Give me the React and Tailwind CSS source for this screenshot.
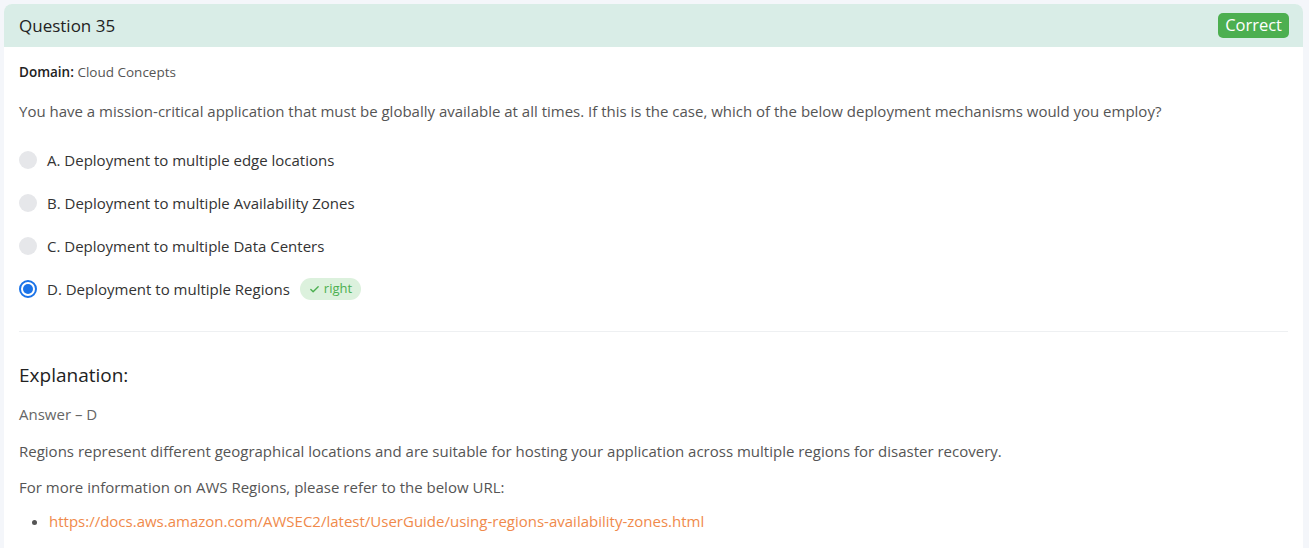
import React from 'react';

const options = [
  { key: 'A', text: 'Deployment to multiple edge locations' },
  { key: 'B', text: 'Deployment to multiple Availability Zones' },
  { key: 'C', text: 'Deployment to multiple Data Centers' },
  { key: 'D', text: 'Deployment to multiple Regions', selected: true, right: true },
];

const Radio = ({ selected }) =>
  selected ? (
    <span className="w-[18px] h-[18px] rounded-full border-2 border-[#1a73e8] flex items-center justify-center shrink-0">
      <span className="w-[10px] h-[10px] rounded-full bg-[#1a73e8]" />
    </span>
  ) : (
    <span className="w-[18px] h-[18px] rounded-full bg-[#e6e7ea] shrink-0" />
  );

const App = () => {
  return (
    <div className="min-h-[548px] bg-[#f4f6fa] pt-[4px] pl-[4px] pr-[6px] font-['Open_Sans',sans-serif]">
      <div className="bg-white rounded-t-[8px] min-h-[544px]">
        <div className="h-[43px] bg-[#d9ede7] rounded-t-[8px] flex items-center justify-between pl-[15px] pr-[14px]">
          <span className="text-[17px] text-[#222] font-medium">Question 35</span>
          <span className="bg-[#4caf50] text-white text-[16.5px] rounded-[5px] px-[7px] h-[25px] flex items-center">Correct</span>
        </div>
        <div className="px-[15px]">
          <div className="pt-[15px] text-[13.5px] leading-[20px] text-[#555]">
            <span className="font-semibold text-[#222]">Domain:</span> Cloud Concepts
          </div>
          <p className="mt-[18px] text-[15px] leading-[22px] text-[#555]">
            You have a mission-critical application that must be globally available at all times. If this is the case, which of the below deployment mechanisms would you employ?
          </p>
          <div className="mt-[29px] flex flex-col gap-[25px]">
            {options.map((o) => (
              <div key={o.key} className="flex items-center gap-[10px] h-[18px]">
                <Radio selected={o.selected} />
                <span className="text-[15px] font-medium text-[#333]">
                  {o.key}. {o.text}
                </span>
                {o.right && (
                  <span className="flex items-center gap-[4px] bg-[#dcf1dd] text-[#4caf50] text-[13px] rounded-full h-[22px] px-[9px]">
                    <svg width="11" height="11" viewBox="0 0 24 24" fill="none" stroke="currentColor" strokeWidth="3" strokeLinecap="round" strokeLinejoin="round">
                      <path d="M4 12l5 5L20 6" />
                    </svg>
                    right
                  </span>
                )}
              </div>
            ))}
          </div>
          <div className="mt-[33px] border-t border-[#eef0f2]" />
          <h3 className="mt-[29px] text-[19px] leading-[28px] font-medium text-[#222]">Explanation:</h3>
          <p className="mt-[14px] text-[15px] leading-[22px] text-[#666]">Answer – D</p>
          <p className="mt-[15px] text-[15px] leading-[22px] text-[#555]">
            Regions represent different geographical locations and are suitable for hosting your application across multiple regions for disaster recovery.
          </p>
          <p className="mt-[14px] text-[15px] leading-[22px] text-[#555]">For more information on AWS Regions, please refer to the below URL:</p>
          <ul className="mt-[12px] pl-[30px] list-disc marker:text-[#555]">
            <li className="text-[15px] leading-[22px] text-[#f08a4b]">
              https://docs.aws.amazon.com/AWSEC2/latest/UserGuide/using-regions-availability-zones.html
            </li>
          </ul>
        </div>
      </div>
    </div>
  );
};

export default App;
